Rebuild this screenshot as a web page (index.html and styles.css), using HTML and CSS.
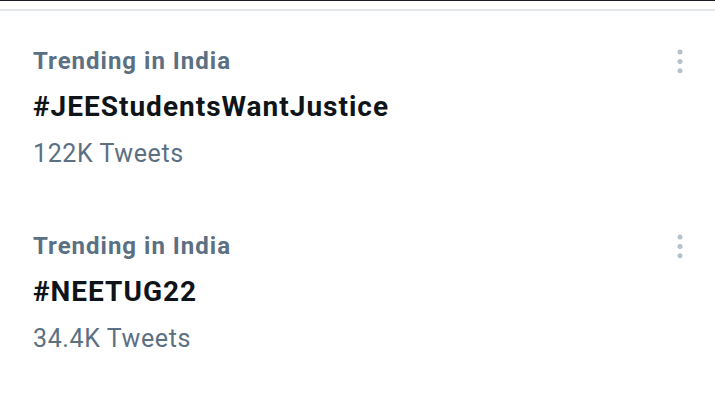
FILE: index.html
```html
<!DOCTYPE html>
<html lang="en">
  <head>
    <meta charset="UTF-8" />
    <meta name="viewport" content="width=device-width, initial-scale=1.0" />
    <title>Trends</title>
    <link rel="stylesheet" href="styles.css">
  </head>
  <body>
    <div class="top-strip"></div>
    <div class="divider"></div>

    <ul class="trend-list">
      <li class="trend">
        <div class="trend-body">
          <div class="trend-context">Trending in India</div>
          <div class="trend-name">#JEEStudentsWantJustice</div>
          <div class="trend-count">122K Tweets</div>
        </div>
        <button class="trend-more" aria-label="More">
          <svg width="6" height="24" viewBox="0 0 6 24">
            <circle cx="3" cy="3" r="2.5"></circle>
            <circle cx="3" cy="12.4" r="2.5"></circle>
            <circle cx="3" cy="21.8" r="2.5"></circle>
          </svg>
        </button>
      </li>
      <li class="trend">
        <div class="trend-body">
          <div class="trend-context">Trending in India</div>
          <div class="trend-name">#NEETUG22</div>
          <div class="trend-count">34.4K Tweets</div>
        </div>
        <button class="trend-more" aria-label="More">
          <svg width="6" height="24" viewBox="0 0 6 24">
            <circle cx="3" cy="3" r="2.5"></circle>
            <circle cx="3" cy="12.4" r="2.5"></circle>
            <circle cx="3" cy="21.8" r="2.5"></circle>
          </svg>
        </button>
      </li>
    </ul>
  </body>
</html>
```

FILE: styles.css
```css
body {
  font-family: Roboto, "Liberation Sans", sans-serif;
  margin: 0;
  padding: 0;
  background-color: #ffffff;
  color: #0f1419;
}

.top-strip {
  height: 1px;
  background-color: #1c1a22;
}

.divider {
  height: 2px;
  margin-top: 8px;
  background-color: #e4e8eb;
}

.trend-list {
  list-style: none;
  margin: 0;
  padding: 0;
}

.trend {
  display: flex;
  justify-content: space-between;
  align-items: flex-start;
  box-sizing: border-box;
  height: 185px;
  padding: 37px 32px 0 33px;
}

.trend-context {
  font-size: 24px;
  font-weight: 700;
  letter-spacing: 1px;
  color: #5b7083;
  line-height: 26px;
}

.trend-name {
  font-size: 28px;
  font-weight: 700;
  letter-spacing: 1px;
  color: #0f1419;
  line-height: 34px;
  margin-top: 16px;
}

.trend-count {
  font-size: 25px;
  letter-spacing: 0.6px;
  color: #5b7083;
  line-height: 30px;
  margin-top: 15px;
}

.trend-more {
  border: none;
  background: none;
  padding: 0;
  margin-top: 1px;
  cursor: pointer;
}

.trend-more svg {
  display: block;
  fill: #b4c2cc;
}
```
